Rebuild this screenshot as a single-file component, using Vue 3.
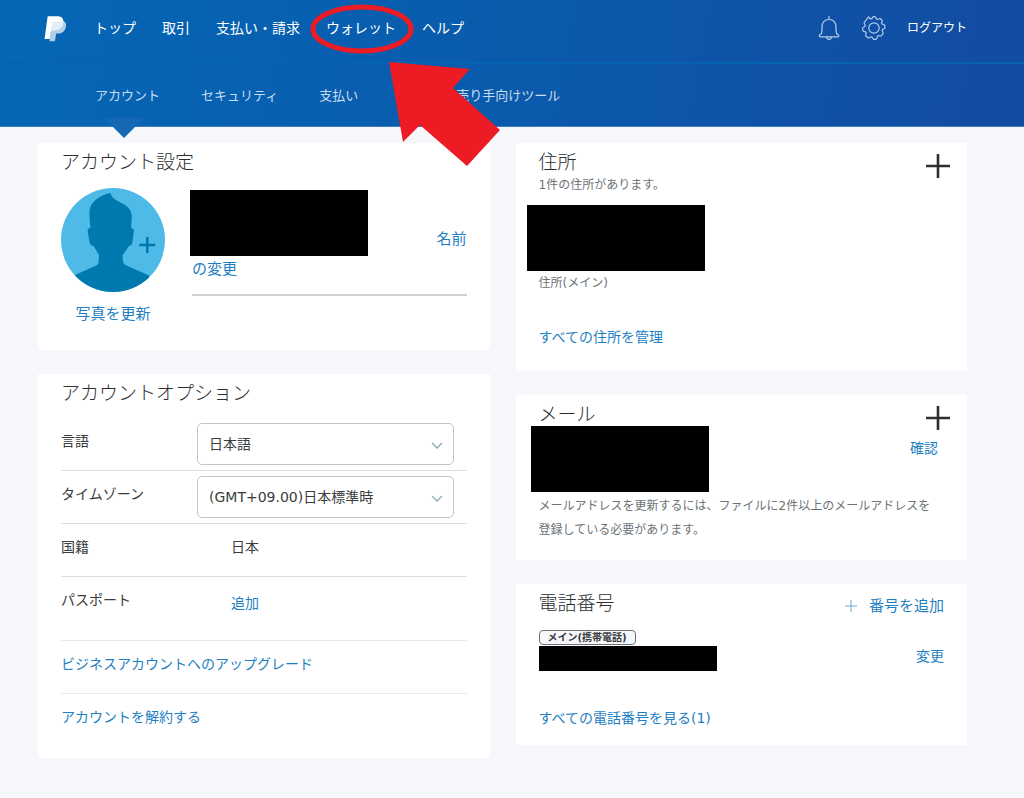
<script setup>
import { ref } from 'vue'

const mainNav = [
  { label: 'トップ' },
  { label: '取引' },
  { label: '支払い・請求' },
  { label: 'ウォレット', marked: true },
  { label: 'ヘルプ' },
]
const language = ref('ja')
const timezone = ref('jst')
</script>

<template>
  <div class="page">
    <header class="header">
      <div class="topbar">
        <a href="#" class="logo" aria-label="PayPal">
          <svg width="24" height="28" viewBox="0 0 24 28">
            <path fill="#b1cfe8" d="M9 7h9.500c3.200 0 5 2 4.500 5-.7 5.200-3.800 7.600-8.200 7.600h-1.600l-1.300 7.700H6.500z" />
            <path fill="#fff" d="M4.700 2.200h9.600c4.600 0 6.500 2.700 5.900 6.400-.9 5.400-4.100 7.700-9.200 7.700H8.100L6.700 25H1.500z" />
            <path fill="#e2ecf6" d="M9.500 7.500h10.900C20.300 13.500 16.500 16.500 11 16.500H8z" />
          </svg>
        </a>
        <nav class="main-nav" aria-label="メイン">
          <a v-for="item in mainNav" :key="item.label" href="#">
            {{ item.label }}
            <svg v-if="item.marked" class="ring" width="104" height="50" viewBox="0 0 104 50" aria-hidden="true">
              <ellipse cx="52" cy="25" rx="49" ry="22" fill="none" stroke="#ed1c24" stroke-width="5" />
            </svg>
          </a>
        </nav>
        <div class="tools">
          <button type="button" aria-label="通知">
            <svg width="24" height="26" viewBox="0 0 24 26" fill="none" stroke="#b4cdea" stroke-width="1.200">
              <path d="M12 1v4M12 4.500C7.500 4.500 5 7.700 5 11.500V16c0 2-.8 3-2.300 4-.8.600-.6 1.800.4 1.800h17.800c1 0 1.200-1.200.4-1.800-1.500-1-2.300-2-2.300-4v-4.500c0-3.800-2.500-7-7-7z" />
              <path d="M9.500 22c.2 1.600 1.100 2.300 2.500 2.300s2.300-.7 2.500-2.300" />
            </svg>
          </button>
          <button type="button" aria-label="設定">
            <svg width="26" height="26" viewBox="0 0 26 26" fill="none" stroke="#b4cdea" stroke-width="1.200" stroke-linejoin="round">
              <circle cx="13" cy="13" r="5.200" />
              <path d="M8.300 1.700C9.300 3.300 10 3.900 11 3.700S12.400 1.500 13.500 1.500h1.200c1.300 0 .9 2 2 2.600s2.200-1.300 3.500-.6l1.600 1.500c1 1.200-.9 2.200-.4 3.400s2.900.6 3.200 1.800v2.500c-.2 1.300-2 .9-2.600 2s1.500 2.600.8 3.800l-1.500 2c-1.200 1-2.200-.6-3.500 0s-.5 3-1.800 3.600h-2.500c-1.300-.2-.9-2.200-2.200-2.500s-2.200 1.700-3.500 1L5.700 21c-1-1.200.8-2.300.3-3.600s-2.900-.7-3.500-2v-2.500c.2-1.300 2.300-1 2.600-2.200S3.300 8.500 4 7.300z" transform="translate(-.8 .2)" />
            </svg>
          </button>
          <a href="#">ログアウト</a>
        </div>
      </div>
      <nav class="sub-nav" aria-label="設定">
        <a href="#" class="current" aria-current="page">アカウント</a>
        <a href="#">セキュリティ</a>
        <a href="#">支払い</a>
        <a href="#" class="seller">売り手向けツール</a>
      </nav>
      <svg class="arrow" width="112" height="106" viewBox="0 0 112 106" aria-hidden="true">
        <path fill="#ed1c24" d="M0 0 81 7 64 26 111 68 78 104 31 63 14 80z" />
      </svg>
    </header>

    <main class="columns">
      <div class="column">
        <section class="card">
          <h2>アカウント設定</h2>
          <div class="profile">
            <div class="photo">
              <svg width="104" height="104" viewBox="0 0 104 104" aria-hidden="true">
                <clipPath id="disc"><circle cx="52" cy="52" r="52" /></clipPath>
                <g clip-path="url(#disc)">
                  <path fill="#4dbae8" d="M0 0h104v104H0z" />
                  <path fill="#0079ae" d="M49.500 5c.5 4 4 6 9 9 6 3 12 6 12.300 14.500L70 40c2.500.3 3.200 1.500 2.700 4l-1.200 10c-.3 2.500-1.500 3.500-3.500 4l-6.500 9.500.5 6c.3 2 1.500 3 3.500 4L88 87.500V104H14V87l20-9c2.500-1 3.500-2 3.700-4l.3-7-5.500-9c-2.500-.5-3.700-1.500-4-4l-1.700-10c-.3-2.500.5-4 2.700-4.500-.8-5.500-1.200-12-1-17C29.500 14 38 7.500 49.500 5z" />
                  <path stroke="#0079ae" stroke-width="2.600" d="M86.300 49v16M78.300 57h16" />
                </g>
              </svg>
              <a href="#">写真を更新</a>
            </div>
            <div class="identity">
              <div class="identity-row">
                <div class="mask"></div>
                <a href="#">名前</a>
              </div>
              <a href="#">の変更</a>
            </div>
          </div>
        </section>

        <section class="card options">
          <h2>アカウントオプション</h2>
          <div class="row">
            <label for="language">言語</label>
            <div class="select">
              <select id="language" v-model="language">
                <option value="ja">日本語</option>
              </select>
              <svg width="12" height="8" viewBox="0 0 12 8" fill="none" stroke="#8fa9b3" stroke-width="1.300"><path d="M1 1l5 5 5-5" /></svg>
            </div>
          </div>
          <div class="row">
            <label for="timezone">タイムゾーン</label>
            <div class="select">
              <select id="timezone" v-model="timezone">
                <option value="jst">(GMT+09.00)日本標準時</option>
              </select>
              <svg width="12" height="8" viewBox="0 0 12 8" fill="none" stroke="#8fa9b3" stroke-width="1.300"><path d="M1 1l5 5 5-5" /></svg>
            </div>
          </div>
          <div class="row">
            <span>国籍</span>
            <span class="value">日本</span>
          </div>
          <div class="row passport">
            <span>パスポート</span>
            <a href="#" class="value">追加</a>
          </div>
          <div class="row faint"><a href="#">ビジネスアカウントへのアップグレード</a></div>
          <div class="row last"><a href="#">アカウントを解約する</a></div>
        </section>
      </div>

      <div class="column">
        <section class="card address">
          <div class="card-head">
            <h2>住所</h2>
            <button type="button" class="add" aria-label="住所を追加">
              <svg width="24" height="24" viewBox="0 0 24 24" stroke="#2c2e2f" stroke-width="2.600"><path d="M12 0v24M0 12h24" /></svg>
            </button>
          </div>
          <p class="note">1件の住所があります。</p>
          <div class="mask"></div>
          <p class="note kind">住所(メイン)</p>
          <a href="#" class="all">すべての住所を管理</a>
        </section>

        <section class="card mail">
          <div class="card-head">
            <h2>メール</h2>
            <button type="button" class="add" aria-label="メールアドレスを追加">
              <svg width="24" height="24" viewBox="0 0 24 24" stroke="#2c2e2f" stroke-width="2.600"><path d="M12 0v24M0 12h24" /></svg>
            </button>
          </div>
          <div class="mail-row">
            <div class="mask"></div>
            <a href="#">確認</a>
          </div>
          <p class="note">メールアドレスを更新するには、ファイルに2件以上のメールアドレスを登録している必要があります。</p>
        </section>

        <section class="card phone">
          <div class="card-head">
            <h2>電話番号</h2>
            <a href="#" class="add-number">
              <svg width="12" height="12" viewBox="0 0 12 12" stroke="#6ea6d0" stroke-width="1"><path d="M6 0v12M0 6h12" /></svg>
              番号を追加
            </a>
          </div>
          <div class="phone-row">
            <div>
              <span class="badge">メイン(携帯電話)</span>
              <div class="mask"></div>
            </div>
            <a href="#">変更</a>
          </div>
          <a href="#" class="all">すべての電話番号を見る(1)</a>
        </section>
      </div>
    </main>
  </div>
</template>

<style>
body {
  margin: 0;
  background: #f5f7fb;
}
</style>

<style scoped>
.page {
  font-family: "DejaVu Sans", "Noto Sans CJK JP", sans-serif;
  font-size: 14px;
  font-weight: 400;
  line-height: 22px;
  color: #3a3c3e;
}
* {
  box-sizing: border-box;
}
a {
  color: #1f7fc2;
  text-decoration: none;
}
h2,
p {
  margin: 0;
}
button {
  display: block;
  padding: 0;
  border: 0;
  background: none;
}
svg {
  display: block;
}
.header {
  position: relative;
  background: linear-gradient(100deg, #0467b5, #0b59ab 55%, #124ba2);
  border-bottom: 1px solid #3f7cbd;
}
.topbar {
  display: flex;
  align-items: center;
  height: 64px;
  padding: 0 57px 6px 43px;
  border-bottom: 2px solid #0563b1;
}
.logo {
  width: 51px;
}
.main-nav {
  display: flex;
  gap: 26px;
}
.main-nav a {
  position: relative;
  color: #fff;
}
.ring {
  position: absolute;
  left: -16px;
  top: -13px;
  z-index: 1;
}
.tools {
  display: flex;
  align-items: center;
  gap: 20px;
  margin-left: auto;
  font-size: 12px;
}
.tools a {
  color: #fff;
}
.sub-nav {
  display: flex;
  gap: 41px;
  padding: 21px 0 19px 95px;
  font-size: 13px;
}
.sub-nav a {
  position: relative;
  color: #c9dcef;
}
.current::after {
  content: "";
  position: absolute;
  left: 9px;
  top: 33px;
  border: 20px solid transparent;
  border-top-color: #1568b3;
  border-bottom: 0;
}
.sub-nav .seller {
  margin-left: 57px;
}
.arrow {
  position: absolute;
  left: 389px;
  top: 62px;
  z-index: 2;
}
.columns {
  display: grid;
  grid-template-columns: 1fr 1fr;
  gap: 26px;
  padding: 16px 57px 40px 38px;
}
.column {
  display: flex;
  flex-direction: column;
  gap: 24px;
}
.card {
  padding: 5px 23px 25px;
  background: #fff;
}
h2 {
  font-size: 19px;
  font-weight: 300;
  line-height: 28px;
  color: #2c2e2f;
}
.mask {
  width: 178px;
  height: 66px;
  background: #000;
}
.profile {
  display: flex;
  gap: 27px;
  padding-top: 12px;
  font-size: 15px;
}
.photo {
  display: grid;
  justify-items: center;
  gap: 11px;
}
.identity {
  flex: 1;
  align-self: flex-start;
  padding: 2px 0 14px;
  border-bottom: 2px solid #cdd0d2;
}
.identity-row {
  display: flex;
  justify-content: space-between;
  align-items: flex-end;
  margin: 0 0 2px -2px;
}
.identity-row a {
  margin-bottom: 6px;
}
.options {
  padding-bottom: 0;
}
.options h2 {
  margin-bottom: 11px;
}
.row {
  display: flex;
  height: 53px;
  padding-top: 12px;
  border-bottom: 1px solid #dcdee0;
}
.row label,
.row span:first-child {
  width: 136px;
}
.value {
  margin-left: 34px;
}
.passport {
  height: 64px;
}
.passport,
.faint {
  border-color: #e8e9ea;
}
.passport .value {
  padding-top: 3px;
}
.last {
  height: 64px;
  border: 0;
}
.select {
  position: relative;
  width: 257px;
  height: 42px;
  margin-top: -7px;
}
select {
  width: 100%;
  height: 100%;
  padding: 0 30px 0 11px;
  border: 1px solid #bfc5c8;
  border-radius: 5px;
  background: #fff;
  color: #3a3c3e;
  font: inherit;
  appearance: none;
}
.select svg {
  position: absolute;
  right: 11px;
  top: 19px;
}
.card-head {
  display: flex;
  justify-content: space-between;
  align-items: flex-start;
}
.add {
  margin: 6px -6px -6px 0;
}
.note {
  font-size: 12px;
  line-height: 24px;
  color: #6c7378;
}
.address .note {
  line-height: 18px;
}
.address .mask {
  margin: 11px 0 3px -12px;
}
.address {
  padding-bottom: 23px;
}
.all {
  display: block;
}
.kind {
  margin-bottom: 34px;
}
.mail {
  padding-bottom: 18px;
}
.mail .card-head {
  height: 26px;
}
.mail-row {
  display: flex;
  justify-content: space-between;
  padding: 0 6px 2px 0;
  margin-left: -8px;
}
.mail-row a {
  padding-top: 11px;
}
.mail .note {
  padding-right: 6px;
}
.phone {
  padding-bottom: 16px;
}
.add-number {
  display: flex;
  align-items: center;
  gap: 12px;
  padding-top: 6px;
  font-size: 15px;
}
.phone-row {
  display: flex;
  justify-content: space-between;
  margin: 13px 0 36px;
}
.phone-row a {
  padding-top: 15px;
}
.badge {
  display: block;
  width: fit-content;
  margin-bottom: 1px;
  padding: 0 8px;
  border: 1px solid #6c7378;
  border-radius: 4px;
  background: #f5f7fa;
  font-size: 10px;
  font-weight: 700;
  line-height: 13px;
}
.phone .mask {
  height: 25px;
}
</style>
